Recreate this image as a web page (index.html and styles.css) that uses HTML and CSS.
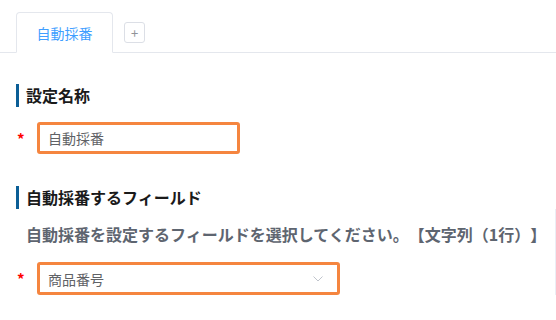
FILE: index.html
```html
<!DOCTYPE html>
<html lang="ja">
<head>
  <meta charset="UTF-8" />
  <title>自動採番</title>
  <link rel="stylesheet" href="styles.css">
</head>
<body>
  <div class="tab-bar">
    <div class="tab active">自動採番</div>
    <div class="tab-add">+</div>
  </div>

  <div class="section">
    <div class="section-title">設定名称</div>
    <div class="form-row">
      <span class="required">*</span>
      <div class="input">自動採番</div>
    </div>
  </div>

  <div class="section second">
    <div class="section-title">自動採番するフィールド</div>
    <div class="field-body">
      <div class="desc">自動採番を設定するフィールドを選択してください。【文字列（1行）】</div>
      <div class="form-row">
        <span class="required">*</span>
        <div class="input select">
          <span>商品番号</span>
          <svg width="10" height="6" viewBox="0 0 10 6"><polyline points="0.5,0.5 5,5 9.5,0.5" fill="none" stroke="#c0c4cc" stroke-width="1"/></svg>
        </div>
      </div>
    </div>
  </div>
</body>
</html>
```

FILE: styles.css
```css
* {
  box-sizing: border-box;
}
body {
  margin: 0;
  font-family: "Noto Sans CJK JP", "Noto Sans", sans-serif;
  background-color: #fff;
  color: #303133;
  overflow: hidden;
  text-spacing-trim: space-all;
}

.tab-bar {
  display: flex;
  align-items: center;
  padding: 12px 0 0 16px;
  border-bottom: 1px solid #e4e7ed;
}

.tab {
  width: 97px;
  height: 41px;
  margin-bottom: -1px;
  border: 1px solid #e4e7ed;
  border-bottom-color: #fff;
  border-radius: 4px 4px 0 0;
  background: #fff;
  display: flex;
  align-items: center;
  justify-content: center;
  font-size: 14px;
  color: #409eff;
}

.tab-add {
  width: 21px;
  height: 21px;
  margin-left: 11px;
  border: 1px solid #dcdfe6;
  border-radius: 3px;
  display: flex;
  align-items: center;
  justify-content: center;
  font-size: 13px;
  color: #909399;
  line-height: 1;
}

.section {
  padding-left: 16px;
  margin-top: 31px;
}

.section.second {
  margin-top: 32px;
}

.section-title {
  border-left: 3px solid #0b5e96;
  padding-left: 7px;
  font-size: 16px;
  font-weight: bold;
  line-height: 23px;
  color: #1a1a1a;
}

.form-row {
  display: flex;
  align-items: center;
  margin-top: 15px;
}

.required {
  width: 21px;
  padding-left: 1px;
  color: #f00;
  font-size: 15px;
  font-weight: bold;
  line-height: 1;
}

.input {
  width: 203px;
  height: 32px;
  border: 3px solid #f5853f;
  border-radius: 3px;
  padding: 0 8px;
  display: flex;
  align-items: center;
  font-size: 14px;
  color: #606266;
}

.select {
  width: 303px;
  height: 33px;
  justify-content: space-between;
  padding-right: 14px;
}

.field-body {
  padding-top: 13px;
  border-right: 1px solid #ebeef5;
}

.desc {
  padding-left: 10px;
  font-size: 16px;
  font-weight: bold;
  line-height: 24px;
  color: #5e6570;
}

.field-body .form-row {
  margin-top: 16px;
}
```
